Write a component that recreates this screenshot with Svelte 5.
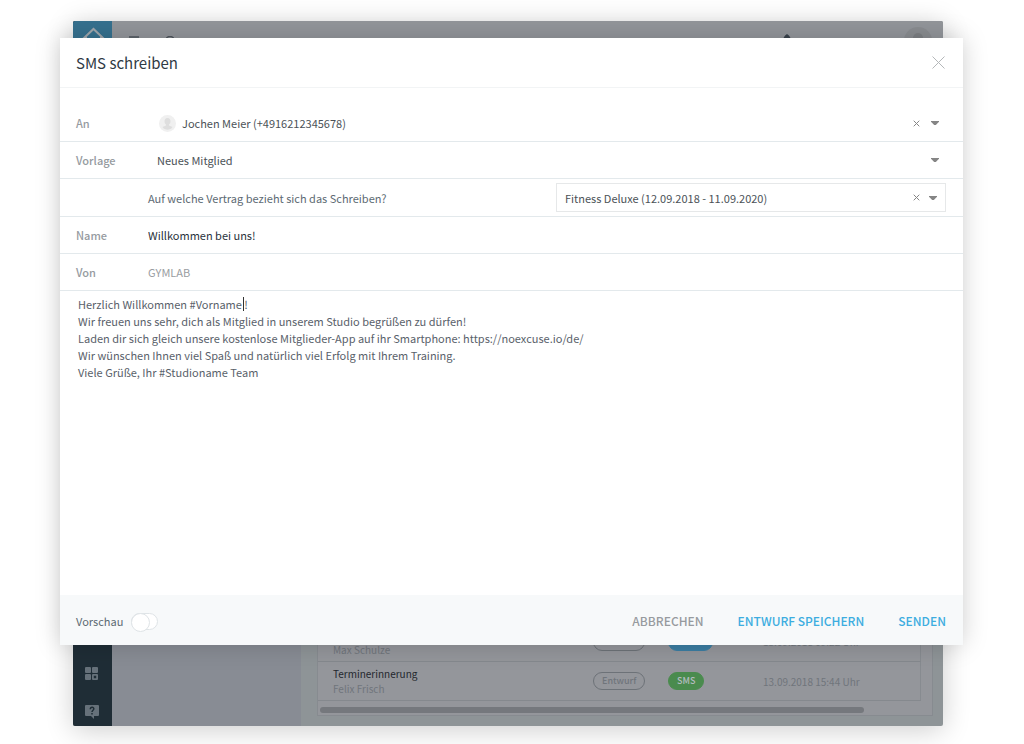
<script lang="ts">
  interface Message {
    readonly title: string;
    readonly recipient: string;
    readonly channel: "E-Mail" | "SMS";
    readonly date: string;
  }

  const messages: readonly Message[] = [
    { title: "Willkommen", recipient: "Max Schulze", channel: "E-Mail", date: "13.09.2018 09:22 Uhr" },
    { title: "Terminerinnerung", recipient: "Felix Frisch", channel: "SMS", date: "13.09.2018 15:44 Uhr" },
  ];

  let recipient = $state("Jochen Meier (+4916212345678)");
  let template = $state("Neues Mitglied");
  let contract = $state("Fitness Deluxe (12.09.2018 - 11.09.2020)");
  let name = $state("Willkommen bei uns!");
  let sender = $state("GYMLAB");
  let preview = $state(false);
  let body = $state(
    [
      "Herzlich Willkommen #Vorname !",
      "Wir freuen uns sehr, dich als Mitglied in unserem Studio begrüßen zu dürfen!",
      "Laden dir sich gleich unsere kostenlose Mitglieder-App auf ihr Smartphone: https://noexcuse.io/de/",
      "Wir wünschen Ihnen viel Spaß und natürlich viel Erfolg mit Ihrem Training.",
      "Viele Grüße, Ihr #Studioname Team",
    ].join("\n"),
  );
</script>

{#snippet arrow()}
  <svg class="arrow" viewBox="0 0 8 4" aria-hidden="true"><path d="M0 0h8v.8L4.800 4H3.200L0 .8z" /></svg>
{/snippet}

{#snippet cross()}
  <svg viewBox="0 0 7 7" aria-hidden="true"><path d="M.7.7l5.6 5.6M6.3.7L.7 6.3" /></svg>
{/snippet}

<div class="stage">
  <div class="app">
    <nav class="sidebar">
      <div class="logo">
        <svg viewBox="0 0 39 39" aria-hidden="true"><path d="M10 18l10.500-10L31 18M13 16v14h15V16" /></svg>
      </div>
      <div class="nav-icons">
        <svg viewBox="0 0 14 14" aria-hidden="true">
          <rect x="0" y="0" width="6" height="6" rx="1" />
          <rect x="7" y="0" width="6" height="6" rx="1" />
          <rect x="0" y="7" width="6" height="6" rx="1" />
          <path fill-rule="evenodd" d="M8 7h4a1 1 0 0 1 1 1v4a1 1 0 0 1-1 1H8a1 1 0 0 1-1-1V8a1 1 0 0 1 1-1zm.8 1.800v2.400h2.400V8.800z" />
        </svg>
        <svg viewBox="0 0 14 14" aria-hidden="true">
          <path d="M1 0h12a1 1 0 0 1 1 1v9a1 1 0 0 1-1 1H9v3l-3-3H1a1 1 0 0 1-1-1V1a1 1 0 0 1 1-1z" />
          <path class="mark" d="M5.300 4.200C5.400 1.600 9 1.900 8.800 4 8.700 5.200 7 5.300 7 7M7 8v1.400" />
        </svg>
      </div>
    </nav>
    <header class="topbar">
      <svg class="menu-icon" viewBox="0 0 48 16" aria-hidden="true">
        <path d="M0 1h10M0 6h10M0 11h10" />
        <circle cx="41" cy="5" r="4.500" />
        <path d="M44 8l4 4" />
      </svg>
      <svg class="bell" viewBox="0 0 12 12" aria-hidden="true"><path d="M6 0C3 2 2 4 2 8h8C10 4 9 2 6 0z" /></svg>
      <svg class="user" viewBox="0 0 28 28" aria-hidden="true">
        <circle cx="14" cy="14" r="14" />
        <circle class="head" cx="14" cy="11" r="5" />
      </svg>
    </header>
    <aside class="panel"></aside>
    <main class="content">
      <div class="list">
        <table>
          <tbody>
            {#each messages as message (message.recipient)}
              <tr>
                <td class="col-name">
                  <div class="title">{message.title}</div>
                  <div>{message.recipient}</div>
                </td>
                <td class="col-state"><span class="pill">Entwurf</span></td>
                <td class="col-channel">
                  <span class="pill filled" class:sms={message.channel === "SMS"}>{message.channel}</span>
                </td>
                <td>{message.date}</td>
              </tr>
            {/each}
          </tbody>
        </table>
        <div class="scrollbar"><div class="thumb"></div></div>
      </div>
    </main>
  </div>

  <form class="modal" role="dialog" aria-labelledby="modal-title" onsubmit={(e) => e.preventDefault()}>
    <header class="modal-head">
      <h1 id="modal-title">SMS schreiben</h1>
      <button type="button" class="close" aria-label="Schließen">
        <svg viewBox="0 0 13 13" aria-hidden="true"><path d="M.5.5l12 12M12.500.5l-12 12" /></svg>
      </button>
    </header>

    <div class="row first">
      <label for="recipient">An</label>
      <div class="picker with-avatar">
        <svg class="avatar" viewBox="0 0 17 17" aria-hidden="true">
          <circle cx="8.500" cy="8.500" r="8.500" />
          <path d="M8.500 3c2 0 3 1.400 3 3.200 0 1.500-.6 2.600-1.500 3.300v1l3.500 1.500c-1 1.800-3 2.800-5 2.800s-4-1-5-2.800L7 10.500v-1C6.100 8.800 5.500 7.700 5.500 6.200 5.500 4.400 6.500 3 8.500 3z" />
        </svg>
        <select id="recipient" bind:value={recipient}>
          <option>Jochen Meier (+4916212345678)</option>
        </select>
        <button type="button" class="clear" aria-label="Empfänger entfernen">{@render cross()}</button>
        {@render arrow()}
      </div>
    </div>

    <div class="row">
      <label for="template">Vorlage</label>
      <div class="picker">
        <select id="template" bind:value={template}>
          <option>Neues Mitglied</option>
        </select>
        {@render arrow()}
      </div>
    </div>

    <div class="row contract">
      <label for="contract">Auf welche Vertrag bezieht sich das Schreiben?</label>
      <div class="picker boxed">
        <select id="contract" bind:value={contract}>
          <option>Fitness Deluxe (12.09.2018 - 11.09.2020)</option>
        </select>
        <button type="button" class="clear" aria-label="Vertrag entfernen">{@render cross()}</button>
        {@render arrow()}
      </div>
    </div>

    <div class="row">
      <label for="name">Name</label>
      <input id="name" type="text" bind:value={name} />
    </div>

    <div class="row">
      <label for="sender">Von</label>
      <input id="sender" class="muted" type="text" bind:value={sender} />
    </div>

    <div class="editor">
      <textarea aria-label="Nachricht" rows="17" spellcheck="false" bind:value={body}></textarea>
      <span class="caret"></span>
    </div>

    <footer class="modal-foot">
      <label class="preview">
        Vorschau
        <input type="checkbox" bind:checked={preview} />
        <span class="switch"></span>
      </label>
      <div class="actions">
        <button type="button" class="cancel">ABBRECHEN</button>
        <button type="button">ENTWURF SPEICHERN</button>
        <button type="submit">SENDEN</button>
      </div>
    </footer>
  </form>
</div>

<style>
  :global(body) {
    background: #fff;
  }

  .stage {
    display: grid;
    padding: 21px 61px 18px 60px;
    font-family: "Noto Sans CJK SC", "Source Sans Pro", sans-serif;
    font-size: 11px;
    line-height: 16px;
    color: #4b5257;
  }

  .stage * {
    box-sizing: border-box;
  }

  button,
  input,
  select,
  textarea {
    margin: 0;
    padding: 0;
    border: 0;
    outline: 0;
    background: none;
    font: inherit;
    color: inherit;
  }

  button {
    cursor: pointer;
  }

  svg {
    display: block;
    flex-shrink: 0;
  }

  /* dimmed application behind the dialog */
  .app {
    grid-area: 1 / 1;
    margin: 0 20px 0 13px;
    display: grid;
    grid-template: 39px 1fr / 39px 189px 1fr;
    border-radius: 2px;
    overflow: hidden;
    background: #8e9497;
    color: #70757b;
    font-size: 10px;
    box-shadow: 0 4px 28px rgba(0, 0, 0, 0.2);
  }

  .sidebar {
    grid-row: 1 / 3;
    display: flex;
    flex-direction: column;
    justify-content: space-between;
    background: #1f2d36;
  }

  .logo {
    height: 39px;
    background: #36718f;
  }

  .logo path {
    fill: none;
    stroke: #a0a7ad;
    stroke-width: 2;
  }

  .nav-icons {
    display: flex;
    flex-direction: column;
    align-items: center;
    gap: 24px;
    padding: 0 2px 7px 0;
  }

  .nav-icons svg {
    width: 14px;
    height: 14px;
    fill: #66717a;
  }

  .nav-icons .mark {
    fill: none;
    stroke: #1f2d36;
    stroke-width: 1.5;
  }

  .topbar {
    grid-column: 2 / 4;
    display: flex;
    align-items: flex-start;
    padding: 6px 11px 0 17px;
    background: #93969b;
  }

  .menu-icon {
    width: 48px;
    height: 16px;
    margin-top: 9px;
    fill: none;
    stroke: #4e555d;
    stroke-width: 1.5;
  }

  .bell {
    width: 12px;
    height: 12px;
    margin: 7px 111px 0 auto;
    fill: #39424c;
  }

  .user {
    width: 28px;
    height: 28px;
    fill: #8a8d91;
  }

  .user .head {
    fill: #7d8084;
  }

  .panel {
    background: #888c94;
  }

  .content {
    display: flex;
    flex-direction: column;
    justify-content: flex-end;
    padding: 0 10px 10px 16px;
  }

  .list {
    border: 1px solid #878b90;
    padding-right: 11px;
    background: #94969b;
  }

  table {
    width: 100%;
    border-collapse: collapse;
    table-layout: fixed;
    border-right: 1px solid #878b90;
  }

  td {
    height: 39px;
    padding: 0;
    border-bottom: 1px solid #85898e;
    line-height: 15px;
    vertical-align: middle;
  }

  .col-name {
    width: 275px;
    padding-left: 15px;
  }

  .col-state {
    width: 75px;
  }

  .col-channel {
    width: 95px;
  }

  .title {
    color: #23272d;
  }

  .pill {
    display: inline-block;
    padding: 0 8px;
    border: 1px solid #6d7278;
    border-radius: 9px;
    font-size: 9px;
    font-weight: 500;
    line-height: 16px;
  }

  .pill.filled {
    border-color: #3b7ea3;
    background: #3b7ea3;
    color: #b4bcc0;
  }

  .pill.sms {
    border-color: #4a8b4e;
    background: #4a8b4e;
  }

  .scrollbar {
    padding: 6px 57px 2px 2px;
  }

  .thumb {
    height: 6px;
    border-radius: 3px;
    background: #75787d;
  }

  .modal {
    grid-area: 1 / 1;
    z-index: 1;
    margin: 17px 0 81px;
    display: flex;
    flex-direction: column;
    background: #fff;
    box-shadow: 0 0 24px rgba(0, 0, 0, 0.18);
  }

  .modal-head {
    display: flex;
    align-items: center;
    justify-content: space-between;
    height: 50px;
    padding: 0 18px 0 16px;
    border-bottom: 1px solid #f2f4f5;
  }

  h1 {
    margin: 0;
    font-size: 15px;
    font-weight: 400;
    line-height: 24px;
    color: #2f3a44;
  }

  .close svg {
    width: 13px;
    height: 13px;
    stroke: #b4b7b9;
  }

  .row {
    display: flex;
    align-items: center;
    height: 37px;
    padding: 0 17px 0 16px;
    border-bottom: 1px solid #e3e9ec;
  }

  .row.first {
    height: 54px;
    padding-top: 17px;
  }

  .row > label {
    width: 72px;
    flex-shrink: 0;
    font-weight: 500;
    color: #969b9f;
  }

  .row > input {
    flex: 1;
    min-width: 0;
    color: #29323b;
  }

  .row > input.muted {
    color: #999da1;
  }

  .picker {
    flex: 1;
    display: flex;
    align-items: center;
    min-width: 0;
    padding: 0 7px 0 9px;
  }

  .picker.with-avatar {
    padding-left: 11px;
  }

  .avatar {
    width: 17px;
    height: 17px;
    margin-right: 6px;
    fill: #f0f0f0;
  }

  .avatar path {
    fill: #dedede;
  }

  select {
    flex: 1;
    min-width: 0;
    appearance: none;
  }

  .clear svg {
    width: 7px;
    height: 7px;
    stroke: #858585;
  }

  .arrow {
    width: 8px;
    height: 4px;
    margin-left: 11px;
    fill: #858585;
  }

  .row.contract {
    height: 38px;
  }

  .row.contract > label {
    flex: 1;
    width: auto;
    padding-left: 72px;
    font-weight: 400;
    color: #5d6a73;
  }

  .picker.boxed {
    flex: 0 0 390px;
    height: 29px;
    padding: 0 8px;
    border: 1px solid #e6e8e9;
  }

  .picker.boxed :global(.arrow) {
    margin-left: 9px;
  }

  .editor {
    position: relative;
    display: flex;
  }

  textarea {
    flex: 1;
    padding: 5px 18px 10px;
    line-height: 17px;
    resize: none;
    overflow: auto;
    color: #59616a;
  }

  .caret {
    position: absolute;
    top: 6px;
    left: 183px;
    width: 1px;
    height: 14px;
    background: #333;
  }

  .modal-foot {
    display: flex;
    align-items: center;
    justify-content: space-between;
    height: 50px;
    padding: 2px 17px 0 16px;
    background: #f7f9fa;
  }

  .preview {
    display: flex;
    align-items: center;
    gap: 8px;
    color: #5d6a73;
  }

  .preview input {
    position: absolute;
    opacity: 0;
  }

  .switch {
    width: 27px;
    height: 17px;
    border: 1px solid #dfe4e7;
    border-radius: 9px;
    background: #fff;
  }

  .switch::before {
    content: "";
    display: block;
    width: 17px;
    height: 17px;
    margin: -1px;
    border: 1px solid #dfe4e7;
    border-radius: 50%;
    background: #fff;
  }

  .preview input:checked + .switch {
    background: #3dade0;
  }

  .preview input:checked + .switch::before {
    margin-left: 9px;
  }

  .actions {
    display: flex;
    gap: 34px;
  }

  .actions button {
    font-size: 12px;
    font-weight: 500;
    color: #3dade0;
  }

  .actions .cancel {
    color: #979b9f;
  }
</style>
